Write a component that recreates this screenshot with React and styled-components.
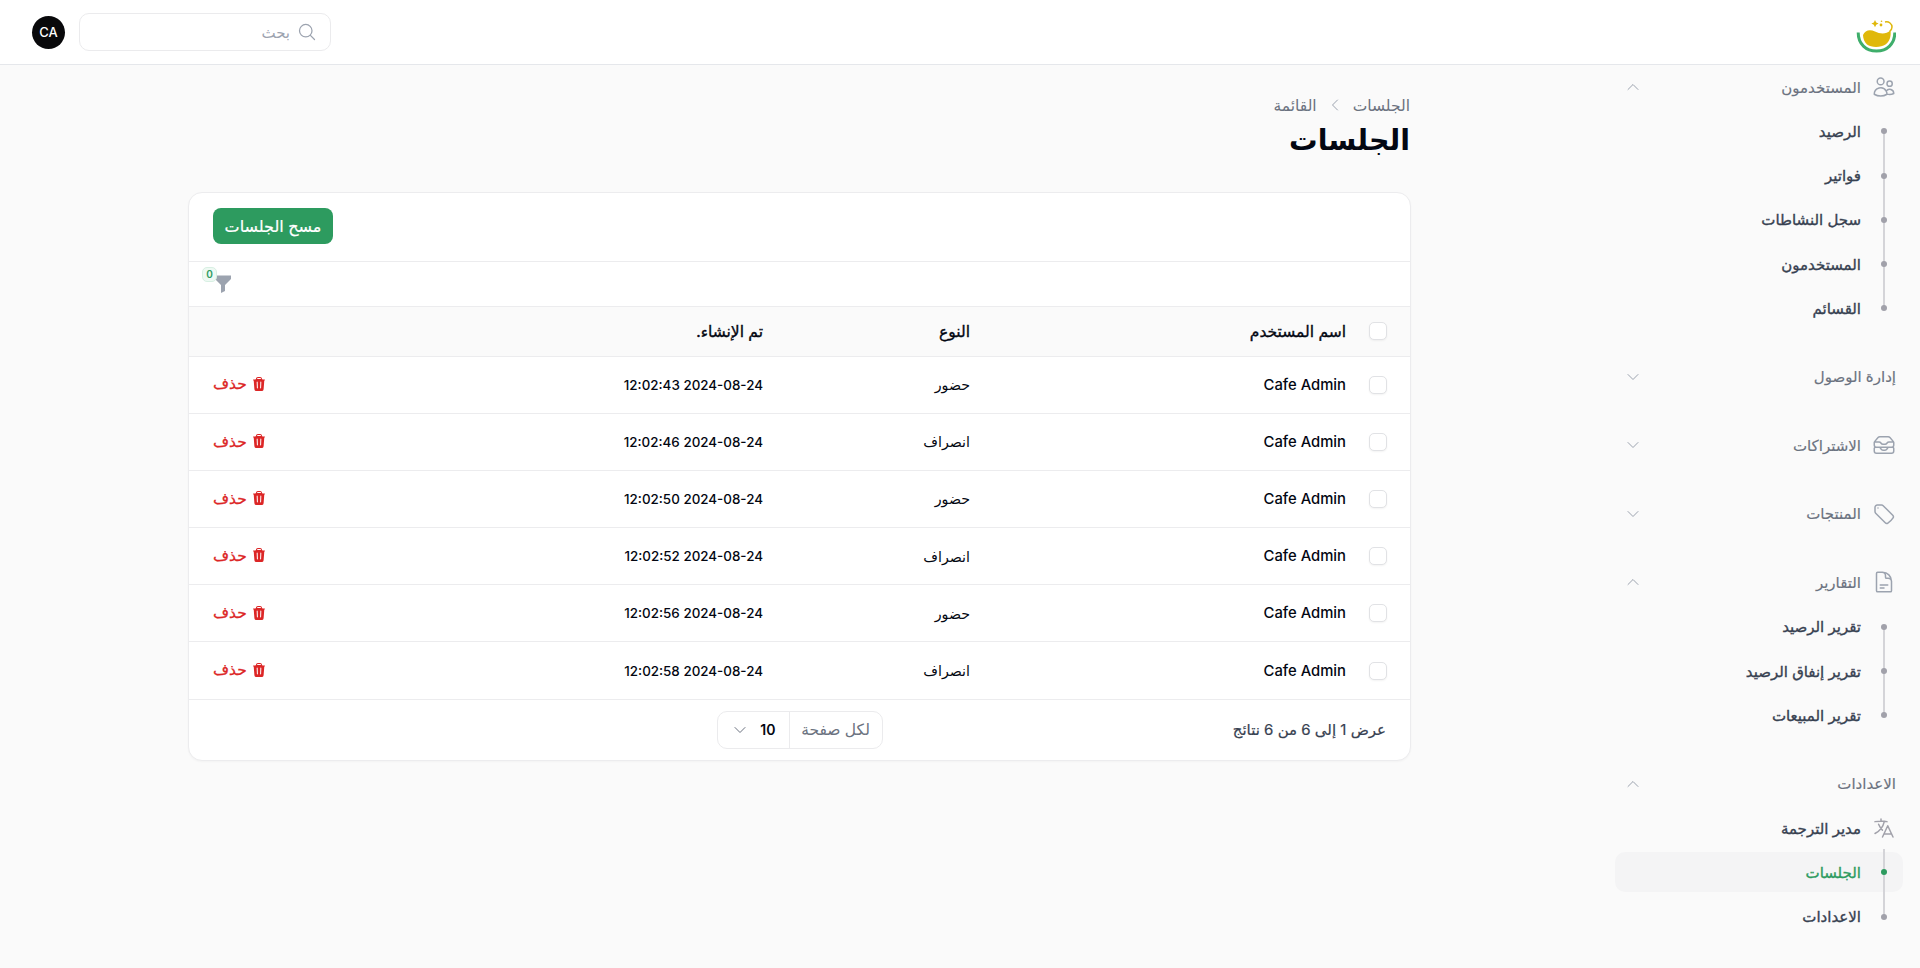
import React from 'react';
import styled, { createGlobalStyle } from 'styled-components';
import {
  HiOutlineUsers, HiOutlineInboxStack, HiOutlineTag, HiOutlineDocumentText, HiOutlineLanguage,
  HiOutlineChevronUp, HiOutlineChevronDown, HiOutlineMagnifyingGlass, HiOutlineChevronLeft,
  HiTrash,
} from 'react-icons/hi2';

const FONT = `Inter, "Noto Sans", "DejaVu Sans", sans-serif`;

const Global = createGlobalStyle`
  html, body { margin: 0; padding: 0; background: #fafafa; }
  body { font-family: ${FONT}; color: #030712; }
  * { box-sizing: border-box; }
`;

const Page = styled.div`
  width: 1920px;
  height: 968px;
  overflow: hidden;
  display: flex;
  flex-direction: column;
  background: #fafafa;
`;

const TopBar = styled.header`
  height: 65px;
  flex: none;
  display: flex;
  align-items: center;
  justify-content: space-between;
  padding: 0 24px 0 32px;
  background: #fff;
  border-bottom: 1px solid #e5e7eb;
`;

const LogoBox = styled.div`
  width: 40px;
  height: 34px;
  margin-top: 8px;
  display: flex;
`;

const TopTools = styled.div`
  display: flex;
  align-items: center;
  gap: 14px;
`;

const Search = styled.div`
  width: 252px;
  height: 38px;
  display: flex;
  align-items: center;
  gap: 7px;
  padding: 0 13px;
  border: 1px solid #ebebed;
  border-radius: 10px;
  background: #fff;
  color: #9ca3af;
  font-size: 15px;
`;

const Avatar = styled.div`
  width: 33px;
  height: 33px;
  border-radius: 50%;
  background: #09090b;
  color: #fff;
  font-size: 13px;
  font-weight: 500;
  display: flex;
  align-items: center;
  justify-content: center;
`;

const Body = styled.div`
  flex: 1;
  display: flex;
  min-height: 0;
`;

const Sidebar = styled.nav`
  width: 320px;
  flex: none;
  padding: 2px 17px 0 15px;
  display: flex;
  flex-direction: column;
  gap: 28.5px;
`;

const Group = styled.div`
  display: flex;
  flex-direction: column;
  gap: 4.3px;
`;

const GroupHead = styled.div`
  height: 40px;
  display: flex;
  align-items: center;
  gap: 11px;
  padding: 0 7px;
  color: #6b7280;
  font-size: 15px;
  font-weight: 400;
  -webkit-text-stroke: 0.15px #6b7280;
  svg.lead { width: 24px; height: 24px; color: #9ca3af; flex: none; }
`;

const GroupLabel = styled.span`
  flex: 1;
`;

const Chevron = styled.span`
  display: flex;
  margin-left: 3px;
  color: #9ca3af;
  svg { width: 16px; height: 16px; }
`;

const Items = styled.div`
  display: flex;
  flex-direction: column;
  gap: 4.3px;
`;

const Item = styled.div`
  position: relative;
  height: 40px;
  display: flex;
  align-items: center;
  gap: 11px;
  padding: 0 7px;
  border-radius: 10px;
  font-size: 15px;
  font-weight: 400;
  color: ${p => (p.$active ? '#2d9b5f' : '#374151')};
  -webkit-text-stroke: 0.35px ${p => (p.$active ? '#2d9b5f' : '#374151')};
  background: ${p => (p.$active ? '#f4f4f5' : 'transparent')};
`;

const Bullet = styled.span`
  position: relative;
  width: 24px;
  height: 24px;
  flex: none;
  display: flex;
  align-items: center;
  justify-content: center;
  color: #a1a1aa;
  -webkit-text-stroke: 0;
  svg { width: 24px; height: 24px; }
  &::before {
    content: '';
    display: ${p => (p.$icon ? 'none' : 'block')};
    width: 6px;
    height: 6px;
    border-radius: 50%;
    background: ${p => (p.$active ? '#2d9b5f' : '#a1a1aa')};
    position: relative;
    z-index: 1;
  }
  &::after {
    content: '';
    display: ${p => (p.$icon ? 'none' : 'block')};
    position: absolute;
    left: 11px;
    width: 1.5px;
    background: #d4d4d8;
    top: ${p => (p.$first ? '12px' : '-11px')};
    bottom: ${p => (p.$last ? '12px' : '-11px')};
  }
`;

const Main = styled.main`
  flex: 1;
  min-width: 0;
  display: flex;
  justify-content: center;
  padding-right: 1px;
`;

const Content = styled.div`
  width: 1223px;
  padding-top: 30px;
`;

const PageHead = styled.div`
  padding-right: 1px;
`;

const Crumbs = styled.div`
  display: flex;
  align-items: center;
  gap: 10px;
  height: 20px;
  font-size: 15.5px;
  font-weight: 400;
  color: #6b7280;
  svg { width: 16px; height: 16px; color: #9ca3af; }
`;

const Title = styled.h1`
  margin: 7px 0 0;
  font-size: 28.5px;
  line-height: 36px;
  font-weight: 700;
  color: #030712;
`;

const Card = styled.section`
  margin-top: 34px;
  background: #fff;
  border: 1px solid #ececee;
  border-radius: 14px;
  box-shadow: 0 1px 2px rgba(0,0,0,.03);
  overflow: hidden;
`;

const CardHead = styled.div`
  height: 69px;
  display: flex;
  align-items: center;
  justify-content: flex-end;
  padding: 0 24px 2px;
  border-bottom: 1px solid #ececee;
`;

const ClearButton = styled.button`
  width: 120px;
  height: 36px;
  border: 0;
  border-radius: 8px;
  background: #2d9b5f;
  color: #fff;
  font: 400 16px ${FONT};
  -webkit-text-stroke: 0.2px #fff;
`;

const FilterRow = styled.div`
  height: 45px;
  display: flex;
  align-items: center;
  justify-content: flex-end;
  padding: 0 26px;
  border-bottom: 1px solid #ececee;
`;

const FilterWrap = styled.div`
  position: relative;
  width: 16px;
  height: 18px;
  svg { display: block; }
`;

const FilterBadge = styled.span`
  position: absolute;
  top: -8px;
  left: -13px;
  width: 15px;
  height: 15px;
  border-radius: 5px;
  background: #eef9f3;
  border: 1px solid #d8f0e3;
  color: #2d9b5f;
  font-size: 10px;
  font-weight: 600;
  line-height: 13px;
  text-align: center;
`;

const Table = styled.table`
  width: 100%;
  table-layout: fixed;
  border-collapse: collapse;
`;

const Th = styled.th`
  height: 49px;
  padding: 0 12px;
  text-align: right;
  font-size: 15.5px;
  font-weight: 400;
  color: #030712;
  -webkit-text-stroke: 0.35px #030712;
  background: #fafafa;
  border-bottom: 1px solid #ececee;
`;

const Td = styled.td`
  height: 57.2px;
  padding: 0 12px;
  text-align: ${p => (p.$end ? 'left' : 'right')};
  font-size: ${p => p.$size || 14.2}px;
  font-weight: ${p => (p.$strong ? 500 : 400)};
  color: #030712;
  border-bottom: 1px solid #ececee;
`;

const CheckCell = styled.span`
  display: block;
  width: 18px;
  height: 18px;
  margin-right: 11px;
  border: 1px solid #e1e2e5;
  border-radius: 5px;
  background: #fff;
  box-shadow: 0 1px 2px rgba(0,0,0,.05);
`;

const DeleteLink = styled.span`
  display: inline-flex;
  align-items: center;
  gap: 4px;
  color: #dc2626;
  font-size: 15.5px;
  font-weight: 400;
  -webkit-text-stroke: 0.3px #dc2626;
  padding-left: 12px;
  svg { width: 16px; height: 16px; }
`;

const Footer = styled.div`
  height: 60px;
  display: grid;
  grid-template-columns: 1fr auto 1fr;
  align-items: center;
  padding: 0 24px;
`;

const ResultText = styled.span`
  font-size: 15px;
  font-weight: 400;
  color: #374151;
  -webkit-text-stroke: 0.2px #374151;
`;

const PerPage = styled.div`
  width: 166px;
  height: 38px;
  display: flex;
  align-items: stretch;
  border: 1px solid #ebebed;
  border-radius: 10px;
  background: #fff;
  font-size: 15.5px;
`;

const PerLabel = styled.span`
  width: 93px;
  display: flex;
  align-items: center;
  justify-content: center;
  color: #6b7280;
  border-left: 1px solid #ebebed;
`;

const PerValue = styled.span`
  flex: 1;
  display: flex;
  align-items: center;
  justify-content: space-between;
  padding: 0 13px 0 14px;
  font-size: 14px;
  font-weight: 600;
  color: #030712;
  svg { width: 16px; height: 16px; color: #6b7280; }
`;

const Logo = () => (
  <svg viewBox="0 0 40 34" width="40" height="34">
    <path d="M2.2 13.5 C2.2 25 10 32 20.5 32 C31 32 38.8 25 38.8 13.5" fill="none" stroke="#3fae6b" strokeWidth="3" />
    <path d="M7 16 C9 11 14 10 19 12.5 C24 15 30 15.5 34.5 11.5 C35.5 18 33 23 29.5 25.5 C25 28.8 15 28.8 11 25.5 C8.5 23 7 19.5 7 16 Z" fill="#e0b80a" />
    <path d="M29 3 C33 2 36 5 36 8 C36 10 35 11.5 33.5 12.5" fill="none" stroke="#e0b80a" strokeWidth="1.5" />
    <path d="M19 1 L20.2 3.4 L22.6 4.6 L20.2 5.8 L19 8.2 L17.8 5.8 L15.4 4.6 L17.8 3.4 Z" fill="#e0b80a" />
    <circle cx="25" cy="6" r="1.4" fill="#e0b80a" />
    <circle cx="25.5" cy="2.2" r="0.8" fill="#e0b80a" />
  </svg>
);

const Funnel = () => (
  <svg viewBox="0 0 16 18" width="16" height="18">
    <path d="M0 0.5 H16 V4 L10 10 V16 L6 18 V10 L0 4 Z" fill="#9ca3af" />
  </svg>
);

const nav = [
  { label: 'المستخدمون', icon: HiOutlineUsers, open: true, items: [{ t: 'الرصيد' }, { t: 'فواتير' }, { t: 'سجل النشاطات' }, { t: 'المستخدمون' }, { t: 'القسائم' }] },
  { label: 'إدارة الوصول', items: [] },
  { label: 'الاشتراكات', icon: HiOutlineInboxStack, items: [] },
  { label: 'المنتجات', icon: HiOutlineTag, items: [] },
  { label: 'التقارير', icon: HiOutlineDocumentText, open: true, items: [{ t: 'تقرير الرصيد' }, { t: 'تقرير إنفاق الرصيد' }, { t: 'تقرير المبيعات' }] },
  { label: 'الاعدادات', open: true, items: [{ t: 'مدير الترجمة', icon: HiOutlineLanguage }, { t: 'الجلسات', active: true }, { t: 'الاعدادات' }] },
];

const rows = [
  ['حضور', '2024-08-24 12:02:43'],
  ['انصراف', '2024-08-24 12:02:46'],
  ['حضور', '2024-08-24 12:02:50'],
  ['انصراف', '2024-08-24 12:02:52'],
  ['حضور', '2024-08-24 12:02:56'],
  ['انصراف', '2024-08-24 12:02:58'],
];

export default function App() {
  return (
    <Page dir="rtl">
      <Global />
      <TopBar>
        <LogoBox><Logo /></LogoBox>
        <TopTools>
          <Search>
            <HiOutlineMagnifyingGlass size={20} />
            <span>بحث</span>
          </Search>
          <Avatar dir="ltr">CA</Avatar>
        </TopTools>
      </TopBar>
      <Body>
        <Sidebar>
          {nav.map(g => (
            <Group key={g.label}>
              <GroupHead>
                {g.icon && <g.icon className="lead" />}
                <GroupLabel>{g.label}</GroupLabel>
                <Chevron>{g.open ? <HiOutlineChevronUp /> : <HiOutlineChevronDown />}</Chevron>
              </GroupHead>
              {g.items.length > 0 && (
                <Items>
                  {g.items.map((it, i) => (
                    <Item key={it.t} $active={it.active}>
                      <Bullet
                        $icon={!!it.icon}
                        $active={it.active}
                        $first={i === 0}
                        $last={i === g.items.length - 1}
                      >
                        {it.icon && <it.icon />}
                      </Bullet>
                      <span>{it.t}</span>
                    </Item>
                  ))}
                </Items>
              )}
            </Group>
          ))}
        </Sidebar>
        <Main>
          <Content>
            <PageHead>
              <Crumbs>
                <span>الجلسات</span>
                <HiOutlineChevronLeft />
                <span>القائمة</span>
              </Crumbs>
              <Title>الجلسات</Title>
            </PageHead>
            <Card>
              <CardHead><ClearButton>مسح الجلسات</ClearButton></CardHead>
              <FilterRow>
                <FilterWrap>
                  <Funnel />
                  <FilterBadge>0</FilterBadge>
                </FilterWrap>
              </FilterRow>
              <Table>
                <colgroup>
                  <col style={{ width: 52 }} />
                  <col style={{ width: 376 }} />
                  <col style={{ width: 207 }} />
                  <col />
                  <col style={{ width: 120 }} />
                </colgroup>
                <thead>
                  <tr>
                    <Th><CheckCell /></Th>
                    <Th>اسم المستخدم</Th>
                    <Th>النوع</Th>
                    <Th>تم الإنشاء.</Th>
                    <Th />
                  </tr>
                </thead>
                <tbody>
                  {rows.map(r => (
                    <tr key={r[1]}>
                      <Td><CheckCell /></Td>
                      <Td $strong $size={14.8}>Cafe Admin</Td>
                      <Td>{r[0]}</Td>
                      <Td $strong $size={13.4}>{r[1]}</Td>
                      <Td $end><DeleteLink><HiTrash /><span>حذف</span></DeleteLink></Td>
                    </tr>
                  ))}
                </tbody>
              </Table>
              <Footer>
                <ResultText>عرض 1 إلى 6 من 6 نتائج</ResultText>
                <PerPage>
                  <PerLabel>لكل صفحة</PerLabel>
                  <PerValue><span>10</span><HiOutlineChevronDown /></PerValue>
                </PerPage>
                <span />
              </Footer>
            </Card>
          </Content>
        </Main>
      </Body>
    </Page>
  );
}
